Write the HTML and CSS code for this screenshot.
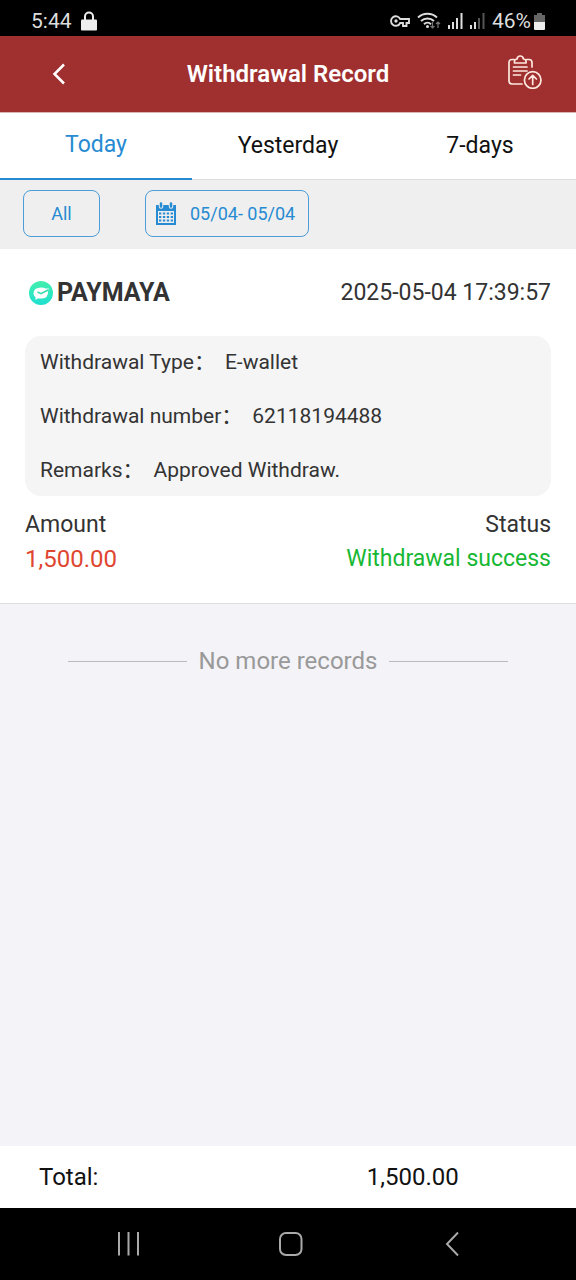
FILE: index.html
```html
<!DOCTYPE html>
<html lang="en">
<head>
<meta charset="utf-8">
<meta name="viewport" content="width=device-width, initial-scale=1">
<title>Withdrawal Record</title>
<link rel="stylesheet" href="styles.css">
</head>
<body>
<div class="app">
  <div class="status-bar">
    <div class="status-left">
      <span>5:44</span>
      <svg width="16" height="20" viewBox="0 0 16 20"><path d="M4 9V5.500a4 4 0 0 1 8 0V9" fill="none" stroke="#eee" stroke-width="2"/><rect y="8.500" width="16" height="11" rx="1" fill="#eee"/></svg>
    </div>
    <div class="status-right">
      <svg width="20" height="12" viewBox="0 0 20 12" fill="none" stroke="#ddd" stroke-width="1.900"><path d="M10.200 4A4.800 4.800 0 1 0 10.200 8H13v3h3.500V8H19V4Z"/><circle cx="6" cy="6" r="1.700" fill="#ddd" stroke="none"/></svg>
      <svg width="24" height="18" viewBox="0 0 24 18" fill="none" stroke="#ddd" stroke-width="1.900"><path d="M1 5.500a14 14 0 0 1 19 0M4 9a9.500 9.500 0 0 1 13 0M7 12.200a5 5 0 0 1 7 0"/><circle cx="10.500" cy="14.500" r="1.500" fill="#ddd" stroke="none"/><path d="M15.500 10v6m-2-2 2 2 2-2M21 16v-6m-2 2 2-2 2 2" stroke="#777" stroke-width="1.200"/></svg>
      <svg width="15" height="16" viewBox="0 0 15 16" fill="#ddd"><path d="M0 12h2v4H0zM4 9h2v7H4zM8 5h2v11H8zM12.500 0h2v16h-2z"/></svg>
      <svg width="15" height="16" viewBox="0 0 15 16" fill="#ddd"><path d="M0 12h2v4H0zM4 9h2v7H4z"/><path d="M8 5h2v11H8zM12.500 0h2v16h-2z" fill="#555"/></svg>
      <div class="battery">
        <span>46%</span>
        <svg width="11" height="17" viewBox="0 0 11 17"><path d="M3 0h5v2h3v8H0V2h3z" fill="#666"/><path d="M0 9h11v7q0 1-1 1H1q-1 0-1-1z" fill="#eee"/></svg>
      </div>
    </div>
  </div>

  <header class="header">
    <button class="icon-button" aria-label="Back"><svg width="14" height="22" viewBox="0 0 14 22"><path d="M12 1.500 2.500 11 12 20.500" fill="none" stroke="#fff" stroke-width="2.500"/></svg></button>
    <h1 class="title">Withdrawal Record</h1>
    <button class="icon-button submit-button" aria-label="Submit record">
      <svg width="34" height="34" viewBox="0 0 34 34" fill="none" stroke="#fde9df" stroke-width="1.700" stroke-linecap="round" stroke-linejoin="round"><path d="M6 4.500H4Q1 4.500 1 7.500V26q0 3 3 3h10M18.500 4.500H21q3 0 3 3v4.500M6.500 8V6q0-1.500 2.500-2Q9.500 1 12.200 1T15.500 4Q18 4.500 18 6v2ZM5.500 12h13.500M5.500 16h13.500M5.500 20h7"/><circle cx="24.700" cy="25" r="8.300"/><path d="M24.700 29.500v-9M21 24l3.700-3.700L28.400 24"/></svg>
    </button>
  </header>

  <nav class="tabs">
    <button class="tab tab-active">Today</button>
    <button class="tab">Yesterday</button>
    <button class="tab">7-days</button>
  </nav>

  <div class="filters">
    <button class="filter filter-type">All</button>
    <button class="filter filter-date">
      <svg width="22" height="24" viewBox="0 0 22 24"><path d="M1 3h20v20H1z" fill="#268bd2"/><path d="M3 9h16v12H3z" fill="#eee"/><path d="M4 11.500h14M4 15h14M4 18.500h14" stroke="#268bd2" stroke-width="2.200" stroke-dasharray="2.300 1.600"/><path d="M6 1.500v3M16 1.500v3" stroke="#efefef" stroke-width="4.500" stroke-linecap="round"/><path d="M6 1.500v3M16 1.500v3" stroke="#268bd2" stroke-width="2.500" stroke-linecap="round"/></svg>
      <span>05/04- 05/04</span>
    </button>
  </div>

  <main class="records">
    <article class="record">
      <div class="record-head">
        <div class="provider">
          <svg width="24" height="24" viewBox="0 0 24 24"><defs><linearGradient id="mint" x2="0" y2="1"><stop stop-color="#43efac"/><stop offset="1" stop-color="#1fe0d0"/></linearGradient></defs><circle cx="12" cy="12" r="12" fill="url(#mint)"/><path d="M4.500 12.500Q4.500 6.500 12 6.500q3 0 4.500 1L20 7.500 19 10.500q.5 6.500-6 7H8.500L6.500 19v-3Q4.500 15 4.500 12.500Z" fill="#fff"/><path d="m8.500 11 3.500 1.700 7.500-4" fill="none" stroke="#35dcae" stroke-width="1.600"/></svg>
          <strong>PAYMAYA</strong>
        </div>
        <time class="time" datetime="2025-05-04T17:39:57">2025-05-04 17:39:57</time>
      </div>
      <dl class="details">
        <div class="detail"><dt>Withdrawal Type：</dt><dd>E-wallet</dd></div>
        <div class="detail"><dt>Withdrawal number：</dt><dd>62118194488</dd></div>
        <div class="detail"><dt>Remarks：</dt><dd>Approved Withdraw.</dd></div>
      </dl>
      <div class="summary">
        <div><div class="summary-label">Amount</div><div class="amount">1,500.00</div></div>
        <div class="summary-end"><div class="summary-label">Status</div><div class="success">Withdrawal success</div></div>
      </div>
    </article>
    <p class="end-note">No more records</p>
  </main>

  <footer class="total"><span>Total:</span><span class="total-value">1,500.00</span></footer>

  <nav class="system-nav">
    <button class="icon-button" aria-label="Recent apps"><svg width="24" height="24" viewBox="0 0 24 24"><path d="M2 0v23.500M11.500 0v23.500M21 0v23.500" stroke="#aaa" stroke-width="2"/></svg></button>
    <button class="icon-button" aria-label="Home"><svg width="24" height="24" viewBox="0 0 24 24"><rect x="1" y="1" width="21.500" height="22" rx="6" fill="none" stroke="#aaa" stroke-width="2"/></svg></button>
    <button class="icon-button" aria-label="Back"><svg width="24" height="24" viewBox="0 0 24 24"><path d="M18 0.500 7 12l11 11.500" fill="none" stroke="#aaa" stroke-width="2"/></svg></button>
  </nav>
</div>
</body>
</html>
```

FILE: styles.css
```css
* {
  box-sizing: border-box;
}

body {
  margin: 0;
  font-family: Roboto, "Noto Sans CJK SC", sans-serif;
  color: #333;
  background: #f3f3f8;
}

button {
  font: inherit;
  color: inherit;
  background: none;
  border: 0;
  padding: 0;
}

svg {
  display: block;
  flex: none;
}

.app {
  min-height: 100vh;
  display: flex;
  flex-direction: column;
}

.status-bar {
  display: flex;
  justify-content: space-between;
  padding: 6px 31px;
  background: #000;
  color: #ddd;
  font-size: 21px;
  line-height: 30px;
  height: 36px;
}

.status-left,
.status-right,
.battery {
  display: flex;
  align-items: center;
  height: 30px;
}

.status-left {
  gap: 9px;
}

.status-right {
  gap: 7px;
}

.battery {
  gap: 3px;
}

.header {
  display: grid;
  grid-template-columns: 1fr auto 1fr;
  align-items: center;
  height: 77px;
  padding: 0 34px 0 52px;
  background: #a02f2f;
  border-bottom: 1px solid #d9b5b5;
}

.icon-button {
  justify-self: start;
}

.submit-button {
  justify-self: end;
  padding-bottom: 5px;
}

.title {
  margin: 0;
  padding-right: 18px;
  color: #fff;
  font-size: 24px;
  font-weight: 600;
  line-height: 32px;
}

.tabs {
  display: grid;
  grid-template-columns: repeat(3, 1fr);
  background: #fff;
}

.tab {
  height: 67px;
  padding-bottom: 2px;
  border-bottom: 1px solid #ddd;
  color: #111;
  font-size: 23px;
}

.tab-active {
  border-bottom: 2px solid #268bd2;
  color: #268bd2;
}

.filters {
  display: flex;
  gap: 45px;
  padding: 10px 23px 12px;
  background: #efefef;
}

.filter {
  display: flex;
  align-items: center;
  justify-content: center;
  height: 47px;
  border: 1px solid #4c9dd8;
  border-radius: 8px;
  color: #268bd2;
  font-size: 18px;
}

.filter-type {
  width: 77px;
}

.filter-date {
  gap: 13px;
  padding: 0 13px 0 9px;
}

.records {
  flex: 1;
}

.record {
  padding: 27px 25px;
  background: #fff;
  border-bottom: 1px solid #ddd;
}

.record-head,
.summary {
  display: flex;
  justify-content: space-between;
}

.provider {
  display: flex;
  align-items: center;
  gap: 4px;
  padding-left: 4px;
  font-size: 25px;
  line-height: 34px;
}

.time {
  font-size: 23px;
  line-height: 34px;
}

.details {
  display: grid;
  gap: 2px;
  margin: 26px 0 12px;
  padding: 0 15px;
  background: #f5f5f5;
  border-radius: 16px;
  font-size: 21px;
}

.detail {
  display: flex;
  gap: 10px;
  height: 52px;
  align-items: center;
}

.detail dt,
.detail dd {
  margin: 0;
  line-height: 32px;
}

.summary {
  line-height: 34px;
}

.summary-label {
  font-size: 23px;
}

.summary-end {
  text-align: right;
}

.amount {
  color: #df4630;
  font-size: 24px;
}

.success {
  color: #18b834;
  font-size: 23px;
}

.end-note {
  display: flex;
  align-items: center;
  gap: 12px;
  margin: 40px 68px;
  color: #999;
  font-size: 24px;
  line-height: 34px;
}

.end-note::before,
.end-note::after {
  content: "";
  flex: 1;
  height: 1px;
  background: #bbb;
}

.total {
  display: grid;
  grid-template-columns: 57% 1fr;
  padding: 0 39px;
  background: #fff;
  color: #111;
  font-size: 24px;
  line-height: 62px;
}

.total-value {
  padding-left: 44px;
}

.system-nav {
  display: flex;
  align-items: center;
  justify-content: space-between;
  height: 72px;
  padding: 0 112px 0 117px;
  background: #000;
}
```
